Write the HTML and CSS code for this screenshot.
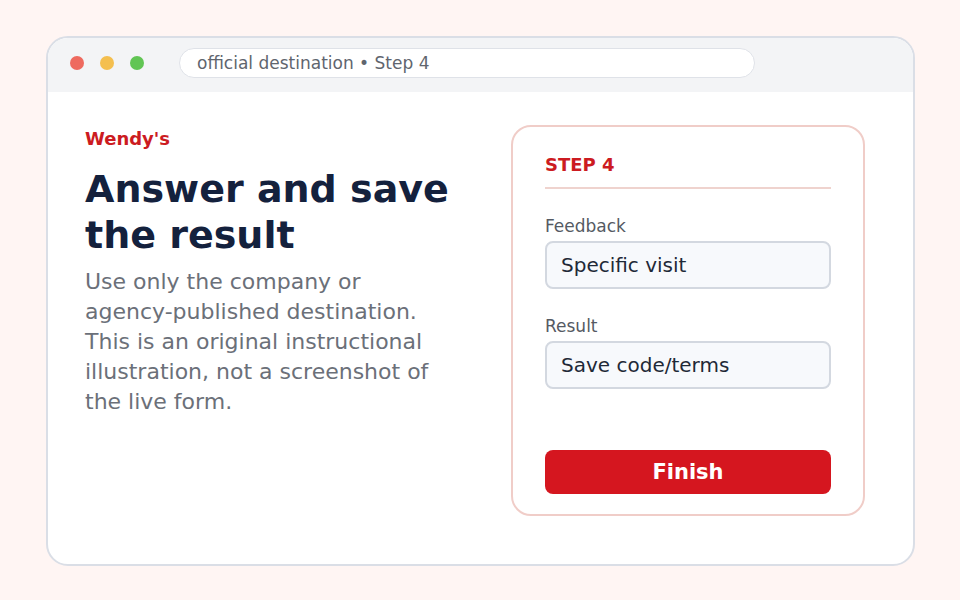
FILE: index.html
```html
<!DOCTYPE html>
<html lang="en">
  <head>
    <meta charset="UTF-8" />
    <meta name="viewport" content="width=device-width, initial-scale=1.0" />
    <title>Step 4</title>
    <link rel="stylesheet" href="styles.css">
  </head>
  <body>
    <div class="window">
      <div class="topbar">
        <span class="dot red"></span>
        <span class="dot yellow"></span>
        <span class="dot green"></span>
        <div class="address">official destination • Step 4</div>
      </div>
      <div class="content">
        <div class="intro">
          <div class="brand">Wendy's</div>
          <h1>Answer and save the result</h1>
          <p>Use only the company or agency-published destination. This is an original instructional illustration, not a screenshot of the live form.</p>
        </div>
        <div class="card">
          <div class="step">STEP 4</div>
          <label class="field-label">Feedback</label>
          <div class="field">Specific visit</div>
          <label class="field-label">Result</label>
          <div class="field">Save code/terms</div>
          <button class="finish">Finish</button>
        </div>
      </div>
    </div>
  </body>
</html>
```

FILE: styles.css
```css
* {
  box-sizing: border-box;
}

body {
  margin: 0;
  background: #fff5f3;
  font-family: "DejaVu Sans", Verdana, sans-serif;
  padding: 36px 45px 0 46px;
}

.window {
  width: 869px;
  height: 530px;
  background: #fff;
  border: 2px solid #dadee6;
  border-radius: 22px;
  overflow: hidden;
}

.topbar {
  height: 54px;
  background: #f3f4f6;
  display: flex;
  align-items: center;
  padding: 0 22px 4px;
}

.dot {
  width: 14px;
  height: 14px;
  border-radius: 50%;
  margin-right: 16px;
}

.dot.red {
  background: #ee6a5f;
}

.dot.yellow {
  background: #f4bf4f;
}

.dot.green {
  background: #61c554;
}

.address {
  margin-left: 19px;
  width: 576px;
  height: 30px;
  background: #fff;
  border: 1px solid #dfe2e8;
  border-radius: 15px;
  padding-left: 17px;
  font-size: 17px;
  line-height: 28px;
  color: #60656e;
}

.content {
  display: grid;
  grid-template-columns: 366px 354px;
  justify-content: space-between;
  padding: 33px 48px 0 37px;
}

.intro {
  padding-top: 3px;
}

.brand {
  color: #cc1b21;
  font-weight: bold;
  font-size: 18px;
  line-height: 22px;
}

h1 {
  margin: 16px 0 9px;
  font-size: 38px;
  line-height: 46px;
  color: #14213d;
}

p {
  margin: 0;
  font-size: 22px;
  line-height: 30px;
  color: #6b7079;
}

.card {
  border: 2px solid #f0cdc8;
  border-radius: 20px;
  padding: 27px 32px 20px;
  display: flex;
  flex-direction: column;
}

.step {
  color: #cc1b21;
  font-weight: bold;
  font-size: 18px;
  line-height: 22px;
  padding-bottom: 11px;
  border-bottom: 2px solid #efd3ce;
  margin-bottom: 27px;
}

.field-label {
  font-size: 17px;
  line-height: 20px;
  color: #555a63;
  margin-bottom: 5px;
}

.field {
  height: 48px;
  border: 2px solid #d3d8e0;
  border-radius: 8px;
  background: #f7f9fc;
  padding-left: 14px;
  font-size: 20px;
  line-height: 44px;
  color: #1f2937;
  margin-bottom: 27px;
}

.finish {
  margin-top: 34px;
  height: 44px;
  border: none;
  border-radius: 8px;
  background: #d5161f;
  color: #fff;
  font-family: inherit;
  font-weight: bold;
  font-size: 21px;
}
```
